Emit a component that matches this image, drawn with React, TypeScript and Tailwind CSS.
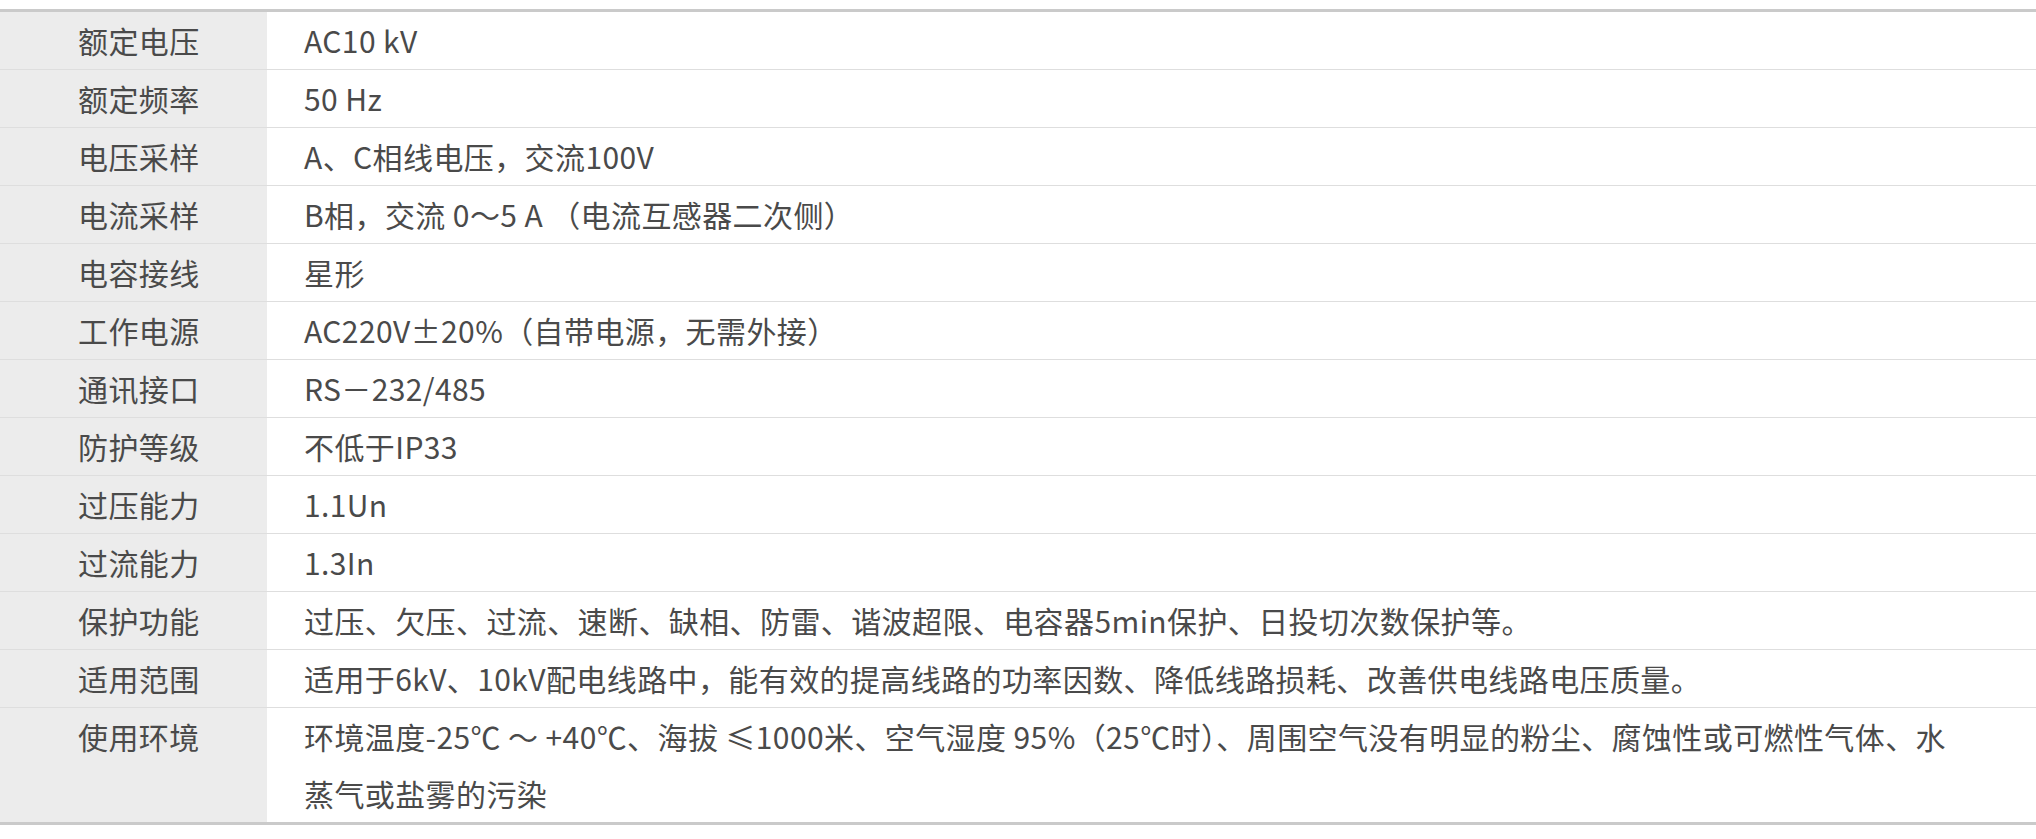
const rows: [string, string][] = [
  ['额定电压', 'AC10 kV'],
  ['额定频率', '50 Hz'],
  ['电压采样', 'A、C相线电压，交流100V'],
  ['电流采样', 'B相，交流 0～5 A （电流互感器二次侧）'],
  ['电容接线', '星形'],
  ['工作电源', 'AC220V±20%（自带电源，无需外接）'],
  ['通讯接口', 'RS－232/485'],
  ['防护等级', '不低于IP33'],
  ['过压能力', '1.1Un'],
  ['过流能力', '1.3In'],
  ['保护功能', '过压、欠压、过流、速断、缺相、防雷、谐波超限、电容器5min保护、日投切次数保护等。'],
  ['适用范围', '适用于6kV、10kV配电线路中，能有效的提高线路的功率因数、降低线路损耗、改善供电线路电压质量。'],
  [
    '使用环境',
    '环境温度-25℃ ～ +40℃、海拔 ≤1000米、空气湿度 95%（25℃时）、周围空气没有明显的粉尘、腐蚀性或可燃性气体、水蒸气或盐雾的污染',
  ],
];

export default function App() {
  return (
    <div
      className="w-full bg-white pt-[9px] text-[30px] leading-[57px] tracking-[0.4px] text-[#4a4a4a]"
      style={{ fontFamily: '"Noto Sans CJK SC", "Noto Sans", sans-serif' }}
    >
      <table className="w-full border-collapse border-y-[3px] border-[#cacaca]">
        <tbody>
          {rows.map(([label, value], i) => (
            <tr key={label} className={i > 0 ? 'border-t border-[#dedede]' : ''}>
              <td className="w-[267px] bg-[#ececec] pl-[78px] align-top whitespace-nowrap">{label}</td>
              <td className="pl-[37px] pr-[64px] align-top">{value}</td>
            </tr>
          ))}
        </tbody>
      </table>
    </div>
  );
}
